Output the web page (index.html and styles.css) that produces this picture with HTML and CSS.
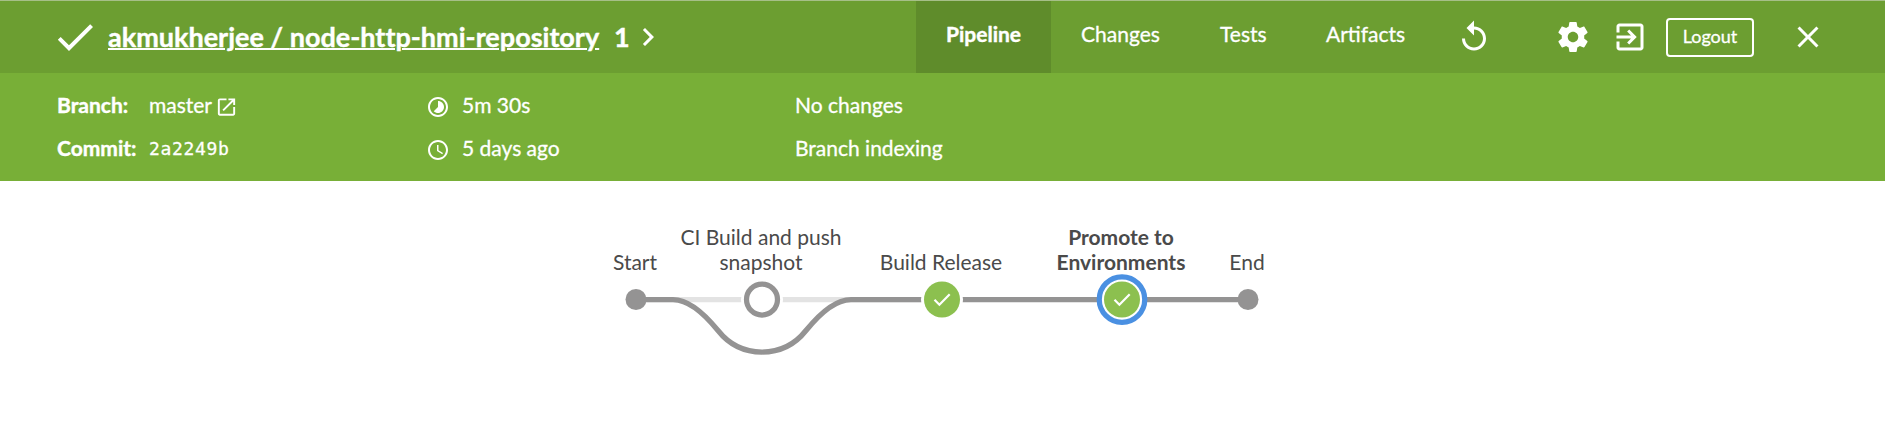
FILE: index.html
```html
<!DOCTYPE html>
<html lang="en">
<head>
<meta charset="utf-8">
<title>akmukherjee / node-http-hmi-repository 1</title>
<link rel="stylesheet" href="styles.css">
</head>
<body>
<header class="topbar">
  <svg class="status" viewBox="0 0 24 24"><path d="M9 16.17L4.83 12l-1.42 1.41L9 19 21 7l-1.41-1.41z"/></svg>
  <h1 class="title"><a class="title-link" href="#"><span>akmukherjee / </span><span>node-http-hmi-repository</span></a><span class="run">1</span></h1>
  <svg class="icon chevron" viewBox="0 0 24 24"><path d="M10 6L8.59 7.41 13.17 12l-4.58 4.59L10 18l6-6z"/></svg>
  <nav class="tabs">
    <a class="tab tab-active" href="#">Pipeline</a>
    <a class="tab changes" href="#">Changes</a>
    <a class="tab tests" href="#">Tests</a>
    <a class="tab artifacts" href="#">Artifacts</a>
  </nav>
  <div class="tools">
    <svg class="icon replay" viewBox="0 0 24 24"><path d="M12 5V1L7 6l5 5V7c3.31 0 6 2.69 6 6s-2.69 6-6 6-6-2.69-6-6H4c0 4.42 3.58 8 8 8s8-3.58 8-8-3.58-8-8-8z"/></svg>
    <svg class="icon gear" viewBox="0 0 24 24"><path d="M19.43 12.98c.04-.32.07-.64.07-.98s-.03-.66-.07-.98l2.11-1.65c.19-.15.24-.42.12-.64l-2-3.46c-.12-.22-.39-.3-.61-.22l-2.49 1c-.52-.4-1.08-.73-1.69-.98l-.38-2.65C14.46 2.18 14.25 2 14 2h-4c-.25 0-.46.18-.49.42l-.38 2.65c-.61.25-1.17.59-1.69.98l-2.49-1c-.23-.09-.49 0-.61.22l-2 3.46c-.13.22-.07.49.12.64l2.11 1.65c-.04.32-.07.65-.07.98s.03.66.07.98l-2.11 1.65c-.19.15-.24.42-.12.64l2 3.46c.12.22.39.3.61.22l2.49-1c.52.4 1.08.73 1.69.98l.38 2.65c.03.24.24.42.49.42h4c.25 0 .46-.18.49-.42l.38-2.65c.61-.25 1.17-.59 1.69-.98l2.49 1c.23.09.49 0 .61-.22l2-3.46c.12-.22.07-.49-.12-.64l-2.11-1.65zM12 15.5c-1.93 0-3.5-1.57-3.5-3.5s1.57-3.5 3.5-3.5 3.5 1.57 3.5 3.5-1.57 3.5-3.5 3.5z"/></svg>
    <svg class="icon exit" viewBox="0 0 24 24"><path d="M10.09 15.59L11.5 17l5-5-5-5-1.41 1.41L12.67 11H3v2h9.67l-2.58 2.59zM19 3H5c-1.11 0-2 .9-2 2v4h2V5h14v14H5v-4H3v4c0 1.1.89 2 2 2h14c1.1 0 2-.9 2-2V5c0-1.1-.9-2-2-2z"/></svg>
    <button class="logout" type="button">Logout</button>
    <svg class="icon close" viewBox="0 0 24 24"><path d="M19 6.41L17.59 5 12 10.59 6.41 5 5 6.41 10.59 12 5 17.59 6.41 19 12 13.41 17.59 19 19 17.59 13.41 12z"/></svg>
  </div>
</header>
<section class="details">
  <div class="label">Branch:</div>
  <div class="value"><span class="master">master</span><svg class="small launch" viewBox="0 0 24 24"><path d="M19 19H5V5h7V3H5c-1.11 0-2 .9-2 2v14c0 1.1.89 2 2 2h14c1.1 0 2-.9 2-2v-7h-2v7zM14 3v2h3.59l-9.83 9.83 1.41 1.41L19 6.41V10h2V3h-7z"/></svg></div>
  <div class="value"><svg class="small time" viewBox="0 0 24 24"><path d="M16.24 7.76C15.07 6.59 13.54 6 12 6v6l-4.24 4.24c2.34 2.34 6.14 2.34 8.49 0 2.34-2.34 2.34-6.14-.01-8.48zM12 2C6.48 2 2 6.48 2 12s4.48 10 10 10 10-4.48 10-10S17.52 2 12 2zm0 18c-4.42 0-8-3.58-8-8s3.58-8 8-8 8 3.58 8 8-3.58 8-8 8z"/></svg><span>5m 30s</span></div>
  <div>No changes</div>
  <div class="label">Commit:</div>
  <div class="hash">2a2249b</div>
  <div class="value"><svg class="small time" viewBox="0 0 24 24"><path d="M11.99 2C6.47 2 2 6.48 2 12s4.47 10 9.99 10C17.52 22 22 17.52 22 12S17.52 2 11.99 2zM12 20c-4.42 0-8-3.58-8-8s3.58-8 8-8 8 3.58 8 8-3.58 8-8 8z"/><path d="M12.5 7H11v6l5.25 3.15.75-1.23-4.5-2.67z"/></svg><span>5 days ago</span></div>
  <div>Branch indexing</div>
</section>
<main class="pipeline">
  <svg class="graph" width="700" height="200" viewBox="600 200 700 200">
    <path class="skipped" d="M636 299.5H942"/>
    <path class="line" d="M636 299.5H673Q693 299.5 718 330.5Q735 352 762 352T806 330.5Q831 299.5 851 299.5H1248"/>
    <circle class="halo" cx="762" cy="299.5" r="21"/>
    <circle class="ring" cx="762" cy="299.5" r="15.5"/>
    <circle class="halo" cx="942" cy="299.5" r="21"/>
    <circle class="success" cx="942" cy="299.5" r="18"/>
    <circle class="selected" cx="1122" cy="299.5" r="22.75"/>
    <circle class="success" cx="1122" cy="299.5" r="18"/>
    <path class="tick" d="M934.5 299.8l4.9 4.9 10.3-10.5M1114.5 299.8l4.9 4.9 10.3-10.5"/>
    <circle class="endpoint" cx="636" cy="299.5" r="10.5"/>
    <circle class="endpoint" cx="1248" cy="299.5" r="10.5"/>
    <g class="names">
      <text x="635" y="270">Start</text>
      <text x="761" y="245">CI Build and push</text>
      <text x="761" y="270">snapshot</text>
      <text x="941" y="270">Build Release</text>
      <text class="current" x="1121" y="245">Promote to</text>
      <text class="current" x="1121" y="270">Environments</text>
      <text x="1247" y="270">End</text>
    </g>
  </svg>
</main>
</body>
</html>
```
FILE: styles.css
```css
* { box-sizing: border-box; }
body {
  margin: 0;
  background: #fff;
  color: #fff;
  font: 21px/26px Lato, "Open Sans", sans-serif;
}
svg { display: block; flex: none; fill: currentColor; }
a { color: inherit; text-decoration: none; }
.topbar {
  display: flex;
  height: 73px;
  padding: 0 59px 0 51px;
  border-top: 1px solid #a6bf88;
  background: #6c9e31;
}
.status { width: 48px; height: 48px; margin: 12px 9px 0 0; }
.title {
  display: flex;
  width: 522px;
  margin: 0;
  padding-top: 19px;
  font-size: 27px;
  line-height: 34px;
  font-weight: 700;
  letter-spacing: 0.01px;
  white-space: pre;
  -webkit-text-stroke: 0.4px currentColor;
}
.title-link { text-decoration: underline; text-decoration-thickness: 2px; width: 506px; }
.icon { width: 36px; height: 36px; margin-top: 18px; }
.tabs { display: flex; margin-left: 250px; }
.tab {
  padding: 20px 30px 0;
  white-space: nowrap;
  -webkit-text-stroke: 0.3px currentColor;
}
.tab-active { width: 135px; background: #5f8c2b; font-weight: 700; -webkit-text-stroke: 0.4px; }
.changes { width: 139px; }
.tests { width: 106px; }
.artifacts { width: 140px; }
.tools { display: flex; margin-left: auto; }
.gear { margin-left: 63px; }
.exit { margin-left: 21px; }
.logout {
  width: 88px;
  height: 39px;
  margin: 17px 36px 0 18px;
  padding: 0 0 3px;
  border: 2px solid #fff;
  border-radius: 4px;
  background: none;
  color: #fff;
  font: 18px/24px Lato, sans-serif;
  -webkit-text-stroke: 0.3px currentColor;
}
.details {
  display: grid;
  grid-template-columns: 92px 277px 369px 1fr;
  grid-auto-rows: 43px;
  height: 108px;
  padding: 19px 57px 0;
  background: #78af37;
  white-space: nowrap;
  -webkit-text-stroke: 0.3px currentColor;
}
.label { font-weight: 700; -webkit-text-stroke: 0.4px; }
.value { display: flex; }
.small { width: 24px; height: 24px; margin-top: 3px; stroke: none; }
.launch { width: 23px; }
.master { width: 66px; }
.time { margin-right: 12px; }
.hash { font-family: "DejaVu Sans Mono", monospace; font-size: 18px; letter-spacing: 0.65px; line-height: 28px; -webkit-text-stroke: 0.3px; }
.pipeline { padding: 19px 0 0 600px; }
.graph path, .ring { fill: none; }
.skipped { stroke: #e3e3e3; stroke-width: 5.25; }
.line { stroke: #949393; stroke-width: 5.25; }
.halo { fill: #fff; }
.ring { stroke: #949393; stroke-width: 5.25; }
.selected { fill: #fff; stroke: #4a90e2; stroke-width: 5.25; }
.success { fill: #8cc04f; }
.graph .tick { stroke: #fff; stroke-width: 2.2; }
.endpoint { fill: #949393; }
.names { fill: #4a4a4a; font-size: 21px; text-anchor: middle; }
.current { font-weight: 700; }
```
